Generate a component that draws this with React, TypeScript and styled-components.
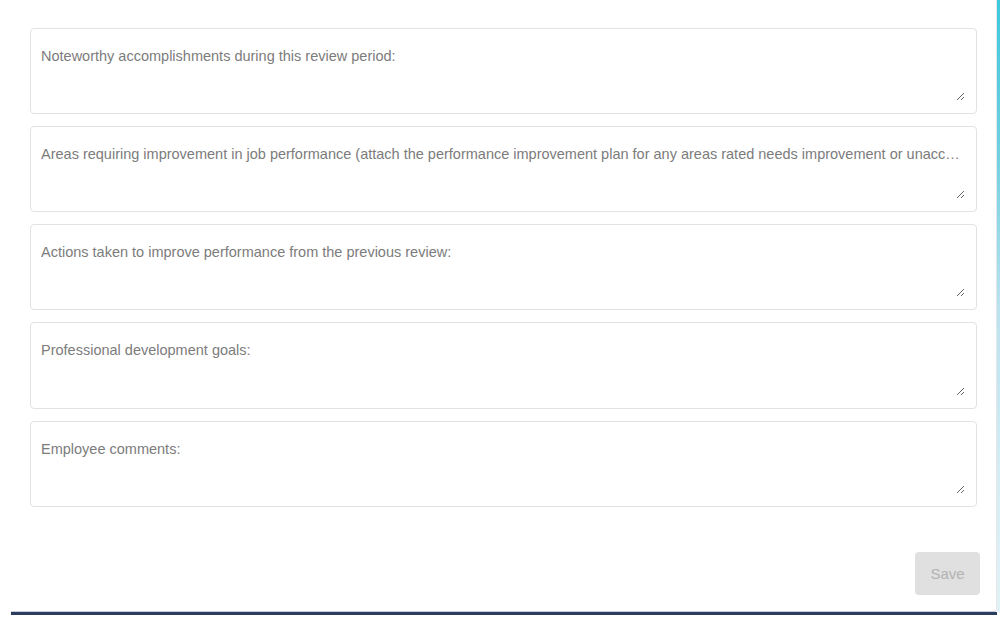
import React from "react";
import styled, { createGlobalStyle } from "styled-components";

const Global = createGlobalStyle`
  html, body { margin: 0; padding: 0; background: #ffffff; }
  body { font-family: "Liberation Sans", Arial, sans-serif; }
  * { box-sizing: border-box; }
`;

const Page = styled.div`
  display: flex;
  width: 1006px;
  height: 626px;
  overflow: hidden;
  background: #ffffff;
`;

const Column = styled.div`
  display: flex;
  flex-direction: column;
  width: 997px;
  padding-left: 11px;
`;

const Card = styled.div`
  display: flex;
  flex-direction: column;
  height: 612px;
  padding: 28px 19px 16px 19px;
  background: #ffffff;
  border-right: 1px solid #e4e6ea;
  border-bottom: 1px solid #c9c9dd;
  border-bottom-right-radius: 3px;
`;

const Fields = styled.div`
  display: flex;
  flex-direction: column;
  gap: 12px;
`;

const Box = styled.div<{ $tall?: boolean }>`
  display: flex;
  height: ${(p) => (p.$tall ? 87 : 86)}px;
  padding: 19px 11px 12px 10px;
  border: 1px solid #e2e2e2;
  border-radius: 4px;
  background: #fff;
`;

const Area = styled.textarea`
  display: block;
  flex: 1;
  width: 100%;
  height: 100%;
  padding: 0;
  border: none;
  font-family: "Liberation Sans", Arial, sans-serif;
  font-size: 14.5px;
  line-height: 17px;
  color: #333;
  background: transparent;
  outline: none;
  resize: vertical;
  white-space: nowrap;
  overflow: hidden;
  text-overflow: ellipsis;

  &::placeholder {
    color: #7c7c7c;
    opacity: 1;
    white-space: nowrap;
    overflow: hidden;
    text-overflow: ellipsis;
  }
`;

const Footer = styled.div`
  margin-top: auto;
  display: flex;
  justify-content: flex-end;
  margin-right: -3px;
`;

const SaveButton = styled.button`
  width: 65px;
  height: 43px;
  border: none;
  border-radius: 4px;
  background: #e0e0e0;
  color: #b3b3b3;
  font-family: "Liberation Sans", Arial, sans-serif;
  font-size: 15px;
  cursor: default;
`;

const NavyBar = styled.div`
  height: 3px;
  background: #2b3d5c;
`;

const Strip = styled.div`
  width: 3px;
  height: 612px;
  background: linear-gradient(
    to bottom,
    #3dc8dc 0%,
    #6fd0e0 25%,
    #b9e2ee 50%,
    #d3ecf3 75%,
    #e2f2f6 100%
  );
`;

const fields = [
  { label: "Noteworthy accomplishments during this review period:", tall: false },
  {
    label:
      "Areas requiring improvement in job performance (attach the performance improvement plan for any areas rated needs improvement or unacceptable):",
    tall: false,
  },
  { label: "Actions taken to improve performance from the previous review:", tall: false },
  { label: "Professional development goals:", tall: true },
  { label: "Employee comments:", tall: false },
];

export default function App() {
  return (
    <>
      <Global />
      <Page>
        <Column>
          <Card>
            <Fields>
              {fields.map((f) => (
                <Box key={f.label} $tall={f.tall}>
                  <Area placeholder={f.label} />
                </Box>
              ))}
            </Fields>
            <Footer>
              <SaveButton disabled>Save</SaveButton>
            </Footer>
          </Card>
          <NavyBar />
        </Column>
        <Strip />
      </Page>
    </>
  );
}
